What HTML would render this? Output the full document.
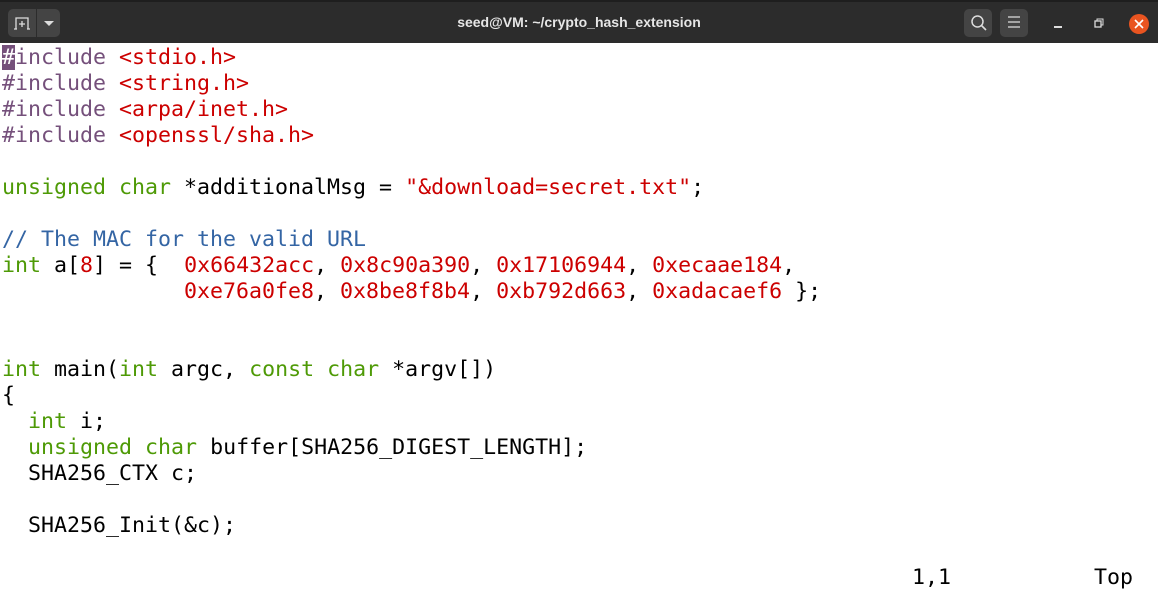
<!DOCTYPE html>
<html><head><meta charset="utf-8"><style>
body{margin:0;width:1158px;height:605px;overflow:hidden;background:#fff;position:relative;font-family:"Liberation Sans",sans-serif}
.tb{position:absolute;left:0;top:0;width:1158px;height:43px;background:#2c2c2c;border-top:2px solid #1e1e1e;box-sizing:border-box}
.title{position:absolute;left:0;right:0;top:12px;text-align:center;color:#e6e6e6;font-size:14px;font-weight:bold}
.btn{position:absolute;top:7px;height:28px;background:#444;border-radius:5px}
pre{position:absolute;left:2px;top:45px;margin:0;font-family:"DejaVu Sans Mono",monospace;font-size:21.6px;line-height:26px;color:#000}
.p{color:#75507b}.s{color:#cc0000}.g{color:#4e9a06}.c{color:#3465a4}
.cur{background:#75507b;color:#fff}
</style></head><body>
<div class="tb">
<div class="btn" style="left:8px;width:52px"></div>
<div style="position:absolute;left:36px;top:7px;width:1px;height:28px;background:#2c2c2c"></div>
<svg style="position:absolute;left:14px;top:12px" width="18" height="18"><path d="M2 15V4h12v11" fill="none" stroke="#ddd" stroke-width="1.3"/><path d="M8 7v6M5 10h6" stroke="#ddd" stroke-width="1.3"/><path d="M0 15h3M13 15h3" stroke="#ddd" stroke-width="1.3"/></svg>
<svg style="position:absolute;left:43px;top:18px" width="12" height="8"><path d="M1 1h10L6 6z" fill="#ddd"/></svg>
<div class="title">seed@VM: ~/crypto_hash_extension</div>
<div class="btn" style="left:964px;width:28px"></div>
<svg style="position:absolute;left:970px;top:12px" width="18" height="18"><circle cx="7.5" cy="7.5" r="5.5" fill="none" stroke="#ddd" stroke-width="1.5"/><path d="M11.5 11.5l4.5 4.5" stroke="#ddd" stroke-width="1.6"/></svg>
<div class="btn" style="left:1000px;width:28px"></div>
<svg style="position:absolute;left:1007px;top:13px" width="14" height="14"><path d="M1 2h12M1 7h12M1 12h12" stroke="#ddd" stroke-width="1.3"/></svg>
<div style="position:absolute;left:1054px;top:24px;width:8px;height:2px;background:#ddd"></div>
<svg style="position:absolute;left:1094px;top:16px" width="10" height="10"><rect x="1" y="3" width="6" height="6" fill="none" stroke="#ddd" stroke-width="1.3"/><path d="M3 3V1h6v6H7" fill="none" stroke="#ddd" stroke-width="1"/></svg>
<div style="position:absolute;left:1129px;top:12px;width:20px;height:20px;border-radius:50%;background:#e95420"></div>
<svg style="position:absolute;left:1134px;top:17px" width="10" height="10"><path d="M1 1l8 8M9 1l-8 8" stroke="#fff" stroke-width="1.6"/></svg>
</div>
<pre><span class="cur">#</span><span class="p">include</span> <span class="s">&lt;stdio.h&gt;</span>
<span class="p">#include</span> <span class="s">&lt;string.h&gt;</span>
<span class="p">#include</span> <span class="s">&lt;arpa/inet.h&gt;</span>
<span class="p">#include</span> <span class="s">&lt;openssl/sha.h&gt;</span>

<span class="g">unsigned</span> <span class="g">char</span> *additionalMsg = <span class="s">"&amp;download=secret.txt"</span>;

<span class="c">// The MAC for the valid URL</span>
<span class="g">int</span> a[<span class="s">8</span>] = {  <span class="s">0x66432acc</span>, <span class="s">0x8c90a390</span>, <span class="s">0x17106944</span>, <span class="s">0xecaae184</span>,
              <span class="s">0xe76a0fe8</span>, <span class="s">0x8be8f8b4</span>, <span class="s">0xb792d663</span>, <span class="s">0xadacaef6</span> };


<span class="g">int</span> main(<span class="g">int</span> argc, <span class="g">const</span> <span class="g">char</span> *argv[])
{
  <span class="g">int</span> i;
  <span class="g">unsigned</span> <span class="g">char</span> buffer[SHA256_DIGEST_LENGTH];
  SHA256_CTX c;

  SHA256_Init(&amp;c);

                                                                      1,1           Top</pre>
</body></html>
